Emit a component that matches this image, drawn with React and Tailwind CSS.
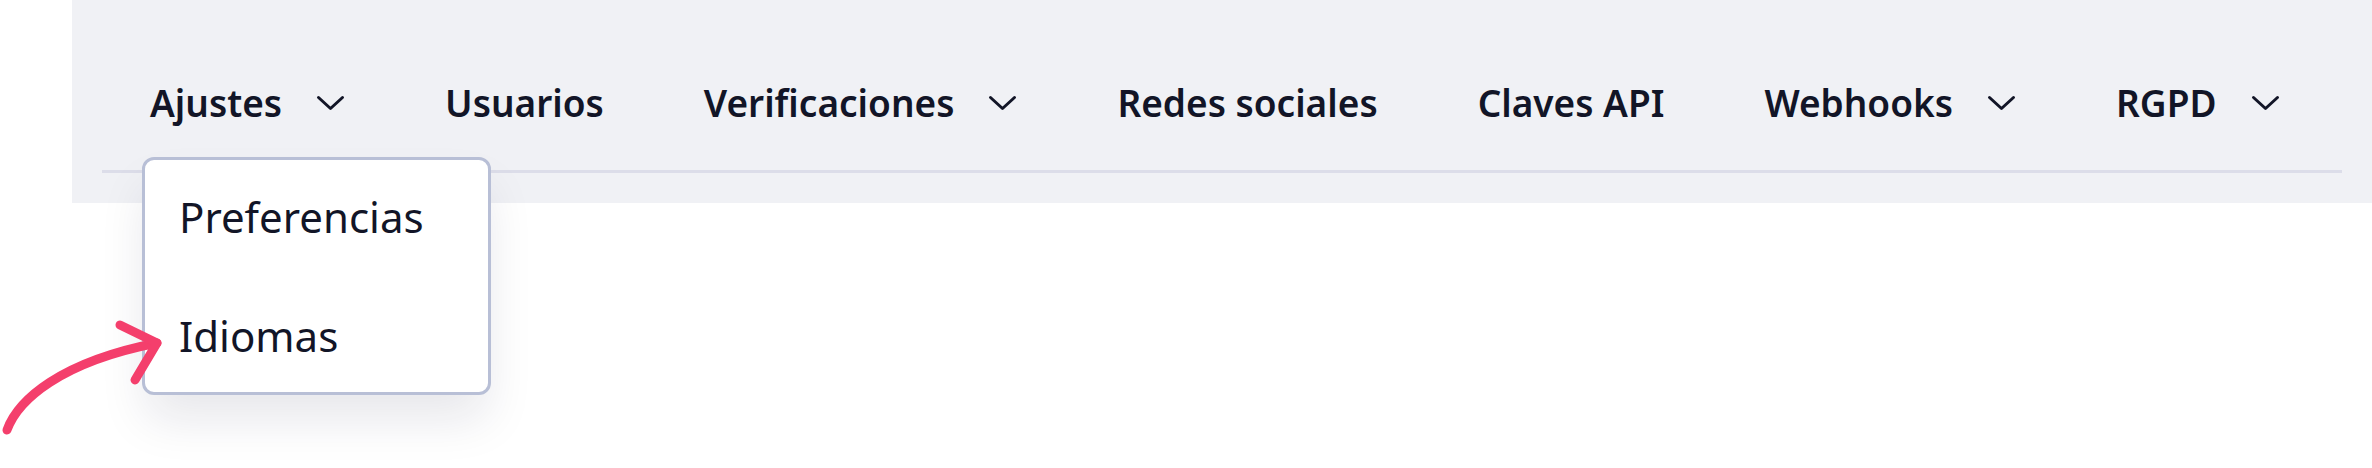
import React from 'react';

const Chevron = () => (
  <svg width="29" height="16" viewBox="0 0 29 16" fill="none" className="shrink-0">
    <polyline points="2.5,2.5 14.5,13.5 26.5,2.5" stroke="#121527" strokeWidth="3" strokeLinecap="round" strokeLinejoin="round" />
  </svg>
);

const NavItem = ({ label, caret, children }) => (
  <div className="relative flex items-center gap-[34px]">
    <span>{label}</span>
    {caret && <Chevron />}
    {children}
  </div>
);

const Arrow = () => (
  <svg
    width="200"
    height="150"
    viewBox="0 0 200 150"
    fill="none"
    className="absolute left-0 top-[300px] z-20"
  >
    <g stroke="#f43f6c" strokeWidth="9" strokeLinecap="round" strokeLinejoin="round">
      <path d="M7 130 C18 100, 60 62, 157 43" />
      <path d="M120 25 L157 43 L135 80" />
    </g>
  </svg>
);

const App = () => {
  return (
    <div className="relative h-[468px] w-full bg-white font-['Noto_Sans',sans-serif] text-[#121527]">
      <div className="ml-[72px] bg-[#f0f1f5] px-[30px] pb-[30px] pt-[79px]">
        <nav className="flex items-center gap-[100px] pl-[48px] text-[37px] font-semibold leading-[48px]">
          <NavItem label="Ajustes" caret>
            <div className="absolute left-[-8px] top-[78px] z-10 flex w-[349px] flex-col gap-[59px] rounded-[12px] border-[3px] border-[#b8bfd6] bg-white px-[34px] pb-[26px] pt-[27px] text-[42px] font-normal leading-[60px] shadow-[0_28px_48px_-4px_rgba(20,24,60,0.10)]">
              <span>Preferencias</span>
              <span>Idiomas</span>
            </div>
          </NavItem>
          <NavItem label="Usuarios" />
          <NavItem label="Verificaciones" caret />
          <NavItem label="Redes sociales" />
          <NavItem label="Claves API" />
          <NavItem label="Webhooks" caret />
          <NavItem label="RGPD" caret />
        </nav>
        <div className="mt-[43px] h-[3px] bg-[#dcdde9]" />
      </div>
      <Arrow />
    </div>
  );
};

export default App;
